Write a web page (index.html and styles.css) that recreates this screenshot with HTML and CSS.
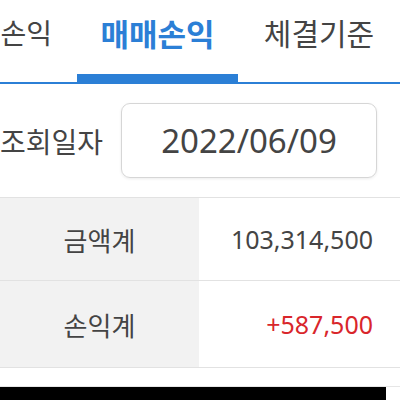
FILE: index.html
```html
<!DOCTYPE html>
<html lang="ko">
<head>
    <meta charset="UTF-8">
    <meta name="viewport" content="width=device-width, initial-scale=1.0">
    <title>매매손익</title>
    <link rel="stylesheet" href="styles.css">
</head>
<body>
    <div class="tabs">
        <div class="tab tab-first">손익</div>
        <div class="tab tab-on">매매손익</div>
        <div class="tab">체결기준</div>
    </div>

    <div class="search">
        <span class="search-label">조회일자</span>
        <div class="date-box">2022/06/09</div>
    </div>

    <div class="summary">
        <div class="row">
            <div class="cell-label">금액계</div>
            <div class="cell-value">103,314,500</div>
        </div>
        <div class="row row-last">
            <div class="cell-label">손익계</div>
            <div class="cell-value plus">+587,500</div>
        </div>
    </div>

    <div class="bottom">
        <div class="bottom-bar"></div>
    </div>
</body>
</html>
```

FILE: styles.css
```css
body {
    margin: 0;
    background-color: #fff;
    font-family: "Noto Sans", "Noto Sans CJK KR", sans-serif;
    color: #444;
    width: 400px;
    overflow: hidden;
}

.tabs {
    display: grid;
    grid-template-columns: 77px 161px 1fr;
    height: 82px;
    border-bottom: 2px solid #2b7fd6;
}

.tab {
    display: flex;
    align-items: center;
    justify-content: center;
    white-space: nowrap;
    font-family: "Noto Sans CJK KR", sans-serif;
    font-size: 30px;
    color: #444;
    padding-bottom: 18px;
}

.tab-first {
    justify-content: flex-end;
    padding-right: 25px;
    font-size: 28px;
}

.tab-on {
    color: #2b7fd6;
    font-size: 31px;
    font-weight: bold;
    border-bottom: 8px solid #2b7fd6;
    padding-bottom: 10px;
}

.search {
    display: flex;
    align-items: center;
    gap: 18px;
    height: 113px;
    border-bottom: 1px solid #e2e2e2;
}

.search-label {
    font-family: "Noto Sans CJK KR", sans-serif;
    font-size: 28px;
    width: 103px;
    white-space: nowrap;
}

.date-box {
    width: 254px;
    height: 73px;
    border: 1px solid #d6d6d6;
    border-radius: 9px;
    box-shadow: 0 1px 3px rgba(0, 0, 0, 0.08);
    display: flex;
    align-items: center;
    justify-content: center;
    font-size: 33px;
}

.row {
    display: grid;
    grid-template-columns: 199px 1fr;
    height: 82px;
    border-bottom: 1px solid #e2e2e2;
}

.row-last {
    height: 86px;
}

.cell-label {
    background-color: #f2f2f2;
    display: flex;
    align-items: center;
    justify-content: center;
    font-family: "Noto Sans CJK KR", sans-serif;
    font-size: 26px;
}

.cell-value {
    display: flex;
    align-items: center;
    justify-content: flex-end;
    padding-right: 27px;
    font-size: 25px;
}

.plus {
    color: #d9262b;
}

.bottom {
    margin-top: 18px;
    border-top: 1px solid #e6e6e6;
}

.bottom-bar {
    width: 386px;
    height: 20px;
    background-color: #000;
}
```
